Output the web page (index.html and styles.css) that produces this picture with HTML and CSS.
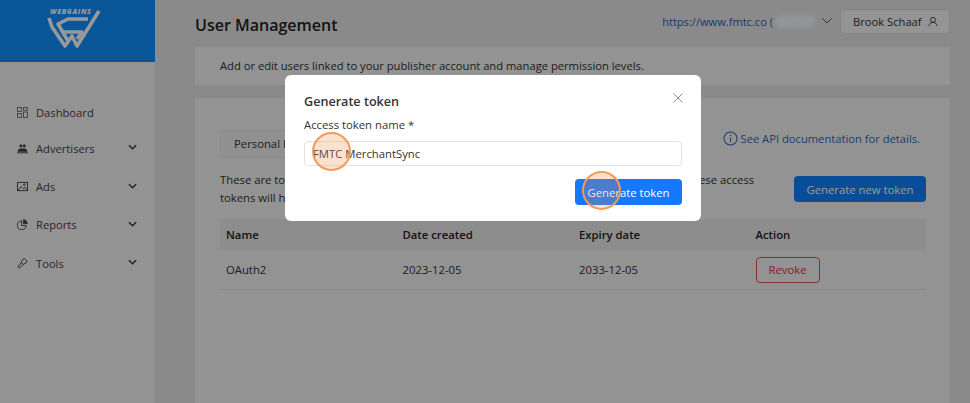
FILE: index.html
```html
<!DOCTYPE html>
<html lang="en">
<head>
<meta charset="utf-8">
<title>User Management</title>
<link rel="stylesheet" href="styles.css">
</head>
<body>
<div class="app">
  <aside class="sidebar">
    <div class="brand">
      <div class="brand-word">WEBGAINS</div>
      <svg class="brand-mark" width="54" height="40" viewBox="47 9 54 40" fill="none" stroke="#fff" stroke-width="3.6" stroke-linejoin="round">
        <path d="M49 18 L52 27 L65 46 L72 36 L77 46 L99 11"/>
        <path d="M88 19 H68 L58 24 L68 41"/>
        <path d="M64 32 H82 L77 39"/>
      </svg>
    </div>
    <nav class="nav">
      <a class="nav-item first"><svg class="nav-icon" viewBox="0 0 12 12" fill="none" stroke="#4c4c4c" stroke-width=".8"><rect x=".5" y=".5" width="4.5" height="4.5"/><rect x="7" y=".5" width="4.5" height="3"/><rect x=".5" y="7" width="4.5" height="4.5"/><rect x="7" y="5.5" width="4.5" height="6"/></svg><span>Dashboard</span></a>
      <a class="nav-item"><svg class="nav-icon" viewBox="0 0 12 12" fill="#3c3c3c"><circle cx="4.3" cy="3.2" r="1.6"/><circle cx="8" cy="3.2" r="1.6"/><path d="M.5 9.5 C1 6.5 3 6 6 6 C9 6 11 6.5 11.5 9.5 H.5Z"/><rect y="10.2" width="12" height="1"/></svg><span>Advertisers</span><svg class="chev" viewBox="0 0 10 6" fill="none" stroke="#3c3c3c" stroke-width="1.6"><path d="M1 1 L5 5 L9 1"/></svg></a>
      <a class="nav-item"><svg class="nav-icon" viewBox="0 0 12 12" fill="none" stroke="#3c3c3c" stroke-width="1"><rect x=".5" y="1.5" width="11" height="9"/><path d="M1 10 L4.5 6 L7 8.5 L9 7 L11 9.5"/><circle cx="8" cy="4" r=".9"/></svg><span>Ads</span><svg class="chev" viewBox="0 0 10 6" fill="none" stroke="#3c3c3c" stroke-width="1.6"><path d="M1 1 L5 5 L9 1"/></svg></a>
      <a class="nav-item"><svg class="nav-icon" viewBox="0 0 12 12" fill="none" stroke="#4a4a4a" stroke-width="1"><path d="M5 2 A4.8 4.8 0 1 0 10 7 H5Z"/><path d="M7 .8 A4 4 0 0 1 11.2 5 H7Z" fill="#4a4a4a"/></svg><span>Reports</span><svg class="chev" viewBox="0 0 10 6" fill="none" stroke="#3c3c3c" stroke-width="1.6"><path d="M1 1 L5 5 L9 1"/></svg></a>
      <a class="nav-item"><svg class="nav-icon" viewBox="0 0 12 12" fill="none" stroke="#3c3c3c" stroke-width="1"><path d="M1 9.8 L4.6 5 L7 7 L2.8 11Z"/><path d="M4.6 5 L6.2 1.6 L8 .6 L11 3.4 L10 5.2 L7 7"/></svg><span>Tools</span><svg class="chev" viewBox="0 0 10 6" fill="none" stroke="#3c3c3c" stroke-width="1.6"><path d="M1 1 L5 5 L9 1"/></svg></a>
    </nav>
  </aside>
  <main class="main">
    <header class="topbar">
      <h1 class="page-title">User Management</h1>
      <div class="account">
        <span class="site">https://www.fmtc.co (</span><span class="blur"></span>
        <svg class="site-chev" viewBox="0 0 10 6" fill="none" stroke="#2f5590" stroke-width="1"><path d="M.5 .5 L5 5 L9.5 .5"/></svg>
        <button class="user-btn">Brook Schaaf
          <svg class="user-icon" viewBox="0 0 12 12" fill="none" stroke="#333" stroke-width="1"><circle cx="6" cy="4" r="3"/><path d="M1 11.5 C1.5 8.5 3.5 7 6 7 C8.5 7 10.5 8.5 11 11.5"/></svg>
        </button>
      </div>
    </header>
    <section class="intro">Add or edit users linked to your publisher account and manage permission levels.</section>
    <section class="panel">
      <div class="tabs">
        <div class="tab">Personal Keys</div>
        <div class="doc"><svg class="info" viewBox="0 0 16 16" fill="none" stroke="#2f6cb0" stroke-width="1.1"><circle cx="8" cy="8" r="7"/><path d="M8 7 V12 M8 4 V5.4"/></svg><span>See API documentation for details.</span></div>
      </div>
      <div class="desc">
        <p class="desc-text">These are tokens you have generated to access the API on your account. Remember that these access tokens will have the same rights as your account.</p>
        <button class="primary">Generate new token</button>
      </div>
      <div class="table">
        <div class="row head"><span>Name</span><span>Date created</span><span>Expiry date</span><span>Action</span></div>
        <div class="row"><span>OAuth2</span><span>2023-12-05</span><span>2033-12-05</span><span><button class="revoke">Revoke</button></span></div>
      </div>
    </section>
  </main>
</div>
<div class="mask"></div>
<div class="modal">
  <h2 class="modal-title">Generate token</h2>
  <svg class="close" viewBox="0 0 12 12" fill="none" stroke="#8f8f8f" stroke-width="1"><path d="M1.5 1.5 L10.5 10.5 M10.5 1.5 L1.5 10.5"/></svg>
  <label class="field-label">Access token name *</label>
  <div class="input">FMTC MerchantSync</div>
  <div class="modal-foot"><button class="submit">Generate token</button></div>
  <span class="click click-a"></span>
  <span class="click click-b"></span>
</div>
</body>
</html>
```
FILE: styles.css
```css
* { box-sizing: border-box; }
html, body { margin: 0; height: 100%; }
body {
  width: 970px; height: 403px; overflow: hidden; position: relative;
  font-family: "Open Sans", "Noto Sans", sans-serif; font-size: 11.3px; color: #222;
  background: #e6e6e6;
}
.app { display: flex; height: 403px; }
.sidebar { width: 155px; flex: none; background: #f5f5f5; }
.brand { height: 62px; background: #0f8fff; position: relative; display: flex; flex-direction: column; align-items: center; padding-top: 8px; }
.brand-word { position: absolute; left: 50px; top: 8px; font-size: 7px; font-weight: 800; font-style: italic; color: #fff; line-height: 7px; letter-spacing: .65px; }
.brand-mark { position: absolute; left: 47px; top: 9px; }
.nav { padding-top: 33px; }
.nav-item { display: flex; align-items: center; height: 38.4px; padding: 0 17px; color: #444; font-size: 11.2px; }
.nav-item.first { height: 34px; }
.nav-icon { width: 11px; height: 11px; margin-right: 8px; flex: none; }
.nav-item span { flex: 1; }
.chev { width: 9px; height: 6px; margin-right: 1px; margin-bottom: 2px; }
.main { flex: 1; min-width: 0; padding: 0 20px 0 40px; }
.topbar { height: 47px; display: flex; align-items: center; justify-content: space-between; }
.page-title { margin: 2px 0 0; font-size: 16px; font-weight: 600; color: #222; }
.account { display: flex; align-items: center; margin-top: -5px; }
.site { color: #2b62b5; font-size: 11.1px; }
.blur { width: 40px; height: 13px; margin-left: 2px; background: #f5f8ff; border-radius: 6px; filter: blur(2px); }
.site-chev { width: 10px; height: 6px; margin: 0 8px 0 7px; }
.user-btn { display: flex; align-items: center; justify-content: space-between; height: 25px; width: 110px; flex: none; padding: 0 11px 0 12px; background: #f7f7f7; border: 1px solid #ddd; border-radius: 4px; font: inherit; font-size: 11.2px; color: #333; white-space: nowrap; }
.user-icon { width: 10px; height: 11px; }
.intro { height: 38px; background: #f5f5f5; padding: 11px 25px 0; font-size: 11.2px; color: #333; line-height: 16px; }
.panel { height: 305px; margin-top: 13px; background: #f5f5f5; padding: 33px 24px 0 25px; }
.tabs { display: flex; justify-content: space-between; align-items: flex-start; height: 27px; }
.tab { width: 120px; height: 28px; margin-top: -1px; padding: 5px 13px; border: 1px solid #e8e8e8; background: #f0f0f0; color: #333; line-height: 16px; }
.doc { display: flex; align-items: center; height: 16px; margin-top: -1px; gap: 3px; color: #2f6cb0; font-size: 11.2px; font-weight: 500; margin-right: 6px; }
.info { width: 15px; height: 15px; }
.desc { display: flex; justify-content: space-between; align-items: center; height: 36px; margin-top: 13px; }
.desc-text { margin: 0; width: 545px; line-height: 18px; color: #333; }
.primary { width: 132px; height: 26px; border: 0; border-radius: 4px; background: #0f80ff; color: #fff; font: inherit; font-size: 11.3px; }
.table { margin-top: 12px; width: 706px; }
.row { display: grid; grid-template-columns: 176.5px 176.5px 176.5px 1fr; align-items: center; height: 40px; padding: 0 6px; border-bottom: 1px solid #e6e6e6; color: #333; }
.row.head { height: 31px; background: #ebebeb; font-weight: 600; color: #222; border-bottom: 0; }
.revoke { width: 64px; height: 26px; border: 1px solid #e35050; border-radius: 4px; background: #f5f5f5; color: #d83a3a; font: inherit; font-size: 11.3px; }
.mask { position: absolute; inset: 0; background: rgba(0,0,0,.4); }
.modal { position: absolute; left: 285px; top: 75px; width: 416px; height: 146px; background: #fff; border-radius: 6px; padding: 0 19px; }
.modal-title { margin: 18px 0 0; font-size: 12.6px; line-height: 17px; font-weight: 600; color: #333; }
.close { position: absolute; right: 17px; top: 17px; width: 12px; height: 12px; }
.field-label { display: block; margin-top: 7px; font-size: 11.3px; line-height: 16px; color: #333; }
.input { height: 25px; margin-top: 8px; border: 1px solid #e2e2e2; border-radius: 4px; padding: 0 8px; line-height: 23px; font-size: 11.3px; color: #333; }
.modal-foot { display: flex; justify-content: flex-end; margin-top: 13px; }
.submit { width: 107px; height: 26px; border: 0; border-radius: 4px; background: #1677ff; color: #fff; font: inherit; font-size: 11.3px; }
.click { position: absolute; width: 39px; height: 39px; border-radius: 50%; border: 2px solid #f4995a; background: rgba(240,138,60,.25); }
.click-a { left: 27px; top: 57px; }
.click-b { left: 297px; top: 96px; }
```
